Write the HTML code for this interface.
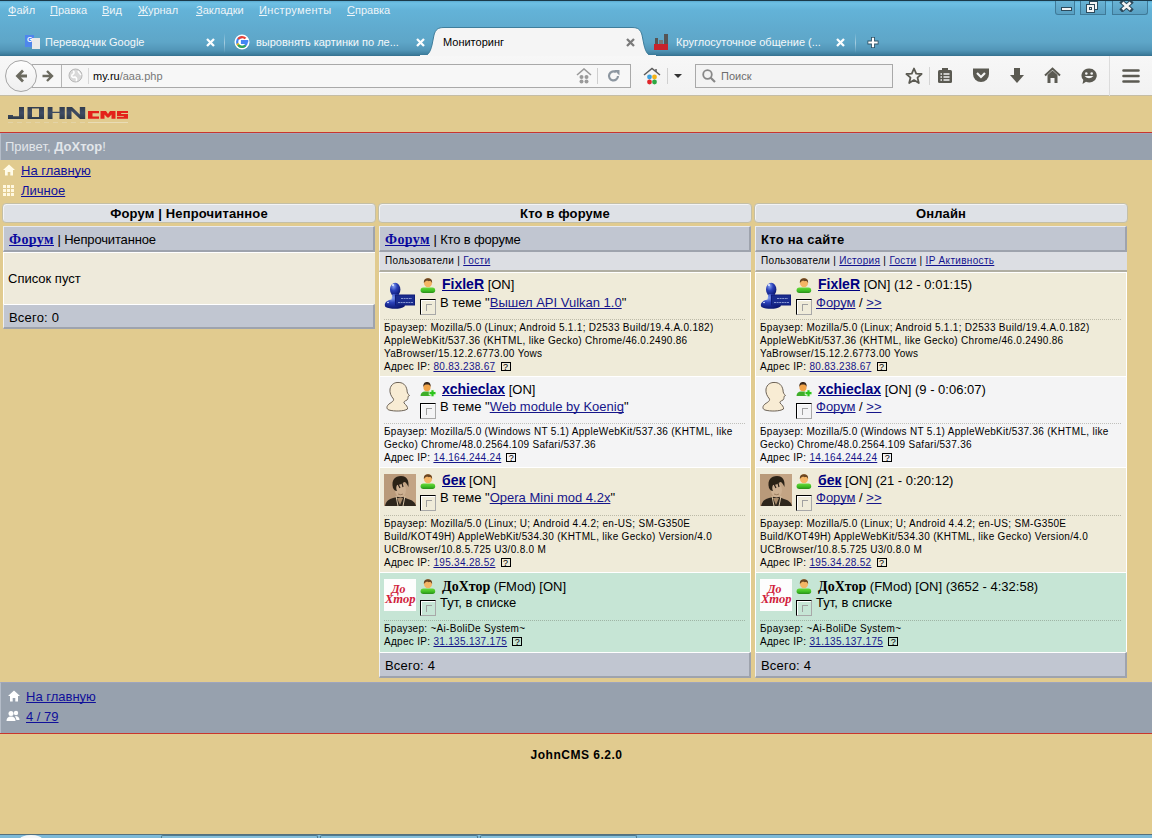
<!DOCTYPE html>
<html><head><meta charset="utf-8">
<style>
*{margin:0;padding:0;box-sizing:border-box}
html,body{width:1152px;height:838px;overflow:hidden;background:#e1cb8f;font-family:"Liberation Sans",sans-serif;position:relative}
.abs{position:absolute;white-space:nowrap}
a{color:#16168a;text-decoration:underline;text-decoration-skip-ink:none}
.menu{top:4px;font-size:11px;color:#eef5f9}
.menu u{text-decoration:underline;text-underline-offset:1px}
.tabt{top:36px;font-size:11px;color:#f4f8fa}
.tabx{top:35px;font-size:11px;color:#fff;font-weight:bold}
.logo{font-family:"Liberation Sans",sans-serif;font-weight:bold;font-size:17px;color:#3c4858;letter-spacing:1px;transform:scaleX(1.35);transform-origin:left top}
.logo2{font-family:"Liberation Sans",sans-serif;font-weight:bold;font-size:11px;color:#e0261e;letter-spacing:1px;transform:scaleX(1.3);transform-origin:left top}
.lnk{font-size:13px}
.lnk a{color:#10109a}
.hdr{top:203px;height:20px;background:#dee1e6;border:1px solid #c4bfa6;box-shadow:inset 1px 1px 0 #f3f3f5;border-radius:4px;text-align:center;font-weight:bold;font-size:13px;color:#000;padding-top:2px;letter-spacing:.15px}
.phdr{top:226px;height:26px;background:#c1c6d1;border-top:1px solid #e8eaf0;border-left:1px solid #eceef2;border-right:2px solid #9ea3ad;border-bottom:2px solid #9ea3ad;font-size:13px;padding:5px 0 0 5px;color:#000;letter-spacing:-.15px}
.sb{font-family:"Liberation Serif",serif;font-weight:bold;font-size:14px;color:#0a0a9e;letter-spacing:.4px}
.kb{font-weight:bold;letter-spacing:.25px}
.tabs{top:252px;height:20px;background:#dcdee3;border-left:1px solid #eceef2;border-bottom:2px solid #b0aea2;font-size:10px;letter-spacing:.32px;padding:3px 0 0 5px;color:#000}
.tabs a{color:#12128e}
.t13{font-size:13px;color:#000}
.nm{font-weight:bold;font-size:14px;color:#000080}
.nmb{font-weight:bold;font-size:14px;font-family:"Liberation Serif",serif}
.dots{height:1px;background-image:linear-gradient(90deg,rgba(60,60,40,.28) 50%,transparent 50%);background-size:2px 1px}
.sm{font-size:10px;color:#000;letter-spacing:.3px;line-height:13px}
.sm a{color:#16168a}
.q{display:inline-block;vertical-align:top;margin-top:2px;margin-left:2px;width:10px;height:9px;border:1px solid #000;font-size:9px;line-height:8px;text-align:center;letter-spacing:0}
.foot{background:#c1c6d1;border-top:1px solid #fff;border-left:1px solid #eceef2;border-right:2px solid #9ea3ad;border-bottom:2px solid #9ea3ad;font-size:13px;padding:5px 0 0 5px;color:#000;letter-spacing:.2px}

</style></head><body>
<!-- title bar + tabs -->
<div class="abs" style="left:0;top:0;width:1152px;height:56px;background:linear-gradient(#1e3e50 0,#1e3e50 1px,#5aaad0 1px,#6ec0e4 3px,#63b3d8 10px,#60abcf 28px,#5ea6c8 42px,#5296b8 50px,#3f80a0 54px,#34708e 56px)"></div>
<!-- window buttons -->
<div class="abs" style="left:1055px;top:0;width:20px;height:15px;border:1px solid #3f7a98;border-top:0;border-radius:0 0 0 3px;background:linear-gradient(#6ab4d6,#589fc2)"></div>
<div class="abs" style="left:1061px;top:7px;width:11px;height:4px;background:#f4f4f4;border:1px solid #2c4a5c"></div>
<div class="abs" style="left:1080px;top:0;width:26px;height:15px;border:1px solid #3f7a98;border-top:0;background:linear-gradient(#6ab4d6,#589fc2)"></div>
<div class="abs" style="left:1089px;top:1px;width:9px;height:9px;background:#f4f4f4;border:1px solid #2c4a5c"></div>
<div class="abs" style="left:1086px;top:4px;width:9px;height:9px;background:#f4f4f4;border:1px solid #2c4a5c"></div>
<div class="abs" style="left:1089px;top:7px;width:3px;height:3px;border:1px solid #2c4a5c"></div>
<div class="abs" style="left:1112px;top:0;width:36px;height:15px;border:1px solid #3f7a98;border-top:0;border-radius:0 0 3px 0;background:linear-gradient(#6ab4d6,#589fc2)"></div>
<svg class="abs" style="left:1119px;top:0px" width="15" height="12"><path d="M3.5 2.5 L11.5 9.5 M11.5 2.5 L3.5 9.5" stroke="#2c4a5c" stroke-width="4.6" stroke-linecap="square"/><path d="M3.5 2.5 L11.5 9.5 M11.5 2.5 L3.5 9.5" stroke="#f4f4f4" stroke-width="2.6"/></svg>
<div class="abs" style="left:0;top:0;width:1152px;height:1px;background:#1b3a4a"></div>

<div class="abs menu" style="left:8px"><u>Ф</u>айл</div>
<div class="abs menu" style="left:50px"><u>П</u>равка</div>
<div class="abs menu" style="left:102px"><u>В</u>ид</div>
<div class="abs menu" style="left:138px"><u>Ж</u>урнал</div>
<div class="abs menu" style="left:196px"><u>З</u>акладки</div>
<div class="abs menu" style="left:259px;letter-spacing:.35px"><u>И</u>нструменты</div>
<div class="abs menu" style="left:347px"><u>С</u>правка</div>

<!-- tab 1 -->
<div class="abs" style="left:25px;top:35px;width:9px;height:12px;background:#4f86ec"></div>
<div class="abs" style="left:32px;top:38px;width:8px;height:11px;background:#e9e9e9"></div>
<div class="abs" style="left:27px;top:36px;font-size:7px;color:#fff;font-weight:bold">G</div>
<div class="abs tabt" style="left:45px">Переводчик Google</div>
<svg class="abs" style="left:206px;top:38px" width="9" height="9" viewBox="0 0 9 9"><path d="M1 1 L8 8 M8 1 L1 8" stroke="#fbfdfe" stroke-width="2.3"/></svg>
<div class="abs" style="left:224px;top:33px;width:1px;height:20px;background:linear-gradient(rgba(255,255,255,0),rgba(255,255,255,.45),rgba(255,255,255,0))"></div>
<!-- tab 2 -->
<svg class="abs" style="left:234px;top:34px" width="16" height="16" viewBox="0 0 16 16"><circle cx="8" cy="8" r="7.5" fill="#fff"/><path d="M8 3.2A4.8 4.8 0 1 0 12.7 8.8H8V7.2h6.3" fill="none" stroke="#4285f4" stroke-width="2.2"/><path d="M4.2 5A4.8 4.8 0 0 1 11.5 4.6" fill="none" stroke="#ea4335" stroke-width="2.2"/><path d="M3.4 9.5A4.8 4.8 0 0 0 4.3 11" fill="none" stroke="#fbbc05" stroke-width="2.2"/><path d="M4.3 11A4.8 4.8 0 0 0 11.5 11.5" fill="none" stroke="#34a853" stroke-width="2.2"/></svg>
<div class="abs tabt" style="left:256px">выровнять картинки по ле...</div>
<svg class="abs" style="left:416px;top:38px" width="9" height="9" viewBox="0 0 9 9"><path d="M1 1 L8 8 M8 1 L1 8" stroke="#fbfdfe" stroke-width="2.3"/></svg>
<!-- active tab -->
<svg class="abs" style="left:420px;top:27px" width="236" height="30" viewBox="0 0 236 30"><path d="M0 29.5 C8 29.5 10 26 12 18 L14 8 C15.5 2.5 18 0.5 24 0.5 L212 0.5 C218 0.5 220.5 2.5 222 8 L224 18 C226 26 228 29.5 236 29.5 Z" fill="#f5f5f5" stroke="#3f7e9c" stroke-width="1"/></svg>
<div class="abs" style="left:420px;top:55px;width:236px;height:2px;background:#f5f5f5"></div>
<div class="abs tabt" style="left:443px;color:#000">Мониторинг</div>
<svg class="abs" style="left:626px;top:38px" width="9" height="9" viewBox="0 0 9 9"><path d="M1 1 L8 8 M8 1 L1 8" stroke="#7a7a7a" stroke-width="2.3"/></svg>
<!-- tab 4 -->
<div class="abs" style="left:654px;top:44px;width:14px;height:6px;background:#c8222b"></div>
<div class="abs" style="left:655px;top:38px;width:3px;height:6px;background:#555"></div>
<div class="abs" style="left:664px;top:34px;width:4px;height:10px;background:#555"></div>
<div class="abs" style="left:659px;top:40px;width:4px;height:4px;background:#777"></div>
<div class="abs tabt" style="left:676px">Круглосуточное общение (...</div>
<svg class="abs" style="left:836px;top:38px" width="9" height="9" viewBox="0 0 9 9"><path d="M1 1 L8 8 M8 1 L1 8" stroke="#fbfdfe" stroke-width="2.3"/></svg>
<div class="abs" style="left:855px;top:33px;width:1px;height:20px;background:linear-gradient(rgba(255,255,255,0),rgba(255,255,255,.45),rgba(255,255,255,0))"></div>
<svg class="abs" style="left:866px;top:36px" width="14" height="13" viewBox="0 0 14 13"><path d="M7 1V12M1.5 6.5H12.5" stroke="#2d5266" stroke-width="4"/><path d="M7 1.8V11.2M2.3 6.5H11.7" stroke="#fff" stroke-width="2.2"/></svg>

<!-- nav bar -->
<div class="abs" style="left:0;top:56px;width:1152px;height:40px;background:linear-gradient(#f7f7f7,#f2f2f2)"></div>
<div class="abs" style="left:0;top:95px;width:1152px;height:1px;background:#c5bda5"></div>
<!-- url bar -->
<div class="abs" style="left:32px;top:64px;width:599px;height:24px;border:1px solid #a9a9a9;background:#f7f7f7"></div>
<div class="abs" style="left:61px;top:65px;width:1px;height:22px;background:#b5b5b5"></div>
<div class="abs" style="left:88px;top:68px;width:1px;height:16px;background:#d8d8d8"></div>
<!-- back circle -->
<div class="abs" style="left:5px;top:60px;width:32px;height:32px;border-radius:50%;border:1px solid #a5a5a5;background:linear-gradient(#fdfdfd,#efefef)"></div>
<svg class="abs" style="left:14px;top:68px" width="16" height="16" viewBox="0 0 16 16"><path d="M9 2.5 L3.5 8 L9 13.5 M4 8 H13" fill="none" stroke="#6b6a5f" stroke-width="2.8" stroke-linejoin="miter"/></svg>
<svg class="abs" style="left:41px;top:69px" width="14" height="14" viewBox="0 0 14 14"><path d="M6 2 L11 7 L6 12 M10.5 7 H1.5" fill="none" stroke="#6b6a5f" stroke-width="2.4"/></svg>
<!-- globe -->
<svg class="abs" style="left:68px;top:68px" width="15" height="15" viewBox="0 0 15 15"><circle cx="7.5" cy="7.5" r="6.5" fill="#d9d9d9" stroke="#b9b9b9"/><path d="M5 3 C7 4 6 6 4 7 C3 9 5 10 7 9 C9 10 9 12 8 13 M10 3 C11 5 12 6 13 7" stroke="#fff" stroke-width="1.6" fill="none"/></svg>
<div class="abs" style="left:93px;top:70px;font-size:11px;color:#000;white-space:nowrap">my.ru<span style="color:#777">/aaa.php</span></div>
<!-- gray home -->
<svg class="abs" style="left:576px;top:68px" width="16" height="16" viewBox="0 0 16 16"><path d="M1 7 L8 1 L15 7" fill="none" stroke="#9a9a9a" stroke-width="1.6"/><circle cx="5.5" cy="9" r="2" fill="#9a9a9a"/><circle cx="10.5" cy="9" r="2" fill="#9a9a9a"/><circle cx="5.5" cy="13.5" r="2" fill="#9a9a9a"/><circle cx="10.5" cy="13.5" r="2" fill="#9a9a9a"/></svg>
<div class="abs" style="left:597px;top:68px;width:1px;height:16px;background:#cfcfcf"></div>
<svg class="abs" style="left:607px;top:69px" width="14" height="14" viewBox="0 0 14 14"><path d="M11 7 A4.5 4.5 0 1 1 9 3.2" fill="none" stroke="#8c96a0" stroke-width="2.2"/><path d="M7 1 L12.5 1 L12.5 6.5 Z" fill="#8c96a0"/></svg>
<!-- color home -->
<svg class="abs" style="left:643px;top:67px" width="18" height="18" viewBox="0 0 18 18"><path d="M1 8 L9 1.5 L17 8" fill="none" stroke="#5c5c5c" stroke-width="1.5"/><path d="M13 2 V5" stroke="#5c5c5c" stroke-width="1.5"/><circle cx="6.5" cy="10" r="2.4" fill="#3aa1e0"/><circle cx="11.5" cy="10" r="2.4" fill="#f4b318"/><circle cx="6.5" cy="15" r="2.4" fill="#e0262b"/><circle cx="11.5" cy="15" r="2.4" fill="#2da842"/></svg>
<div class="abs" style="left:667px;top:68px;width:1px;height:16px;background:#d0d0d0"></div>
<svg class="abs" style="left:674px;top:74px" width="9" height="5"><path d="M0 0 H8 L4 4 Z" fill="#333"/></svg>
<!-- search -->
<div class="abs" style="left:695px;top:64px;width:198px;height:24px;border:1px solid #a9a9a9;background:#f3f3f3"></div>
<svg class="abs" style="left:701px;top:68px" width="16" height="16" viewBox="0 0 16 16"><circle cx="6.5" cy="6.5" r="4.3" fill="none" stroke="#888" stroke-width="1.8"/><path d="M9.5 9.5 L14 14" stroke="#888" stroke-width="2.2"/></svg>
<div class="abs" style="left:721px;top:70px;font-size:11px;color:#6d6d6d">Поиск</div>
<!-- toolbar icons -->
<svg class="abs" style="left:905px;top:67px" width="18" height="18" viewBox="0 0 18 18"><path d="M9 1.5 L11.2 6.6 L16.6 7 L12.5 10.6 L13.8 16 L9 13.1 L4.2 16 L5.5 10.6 L1.4 7 L6.8 6.6 Z" fill="none" stroke="#5b5a52" stroke-width="1.8" stroke-linejoin="round"/></svg>
<div class="abs" style="left:929px;top:67px;width:1px;height:18px;background:#d4d4d4"></div>
<svg class="abs" style="left:937px;top:67px" width="16" height="17" viewBox="0 0 16 17"><rect x="1" y="3" width="14" height="13" rx="1.5" fill="#5b5a52"/><rect x="5" y="1" width="6" height="3" fill="#5b5a52"/><path d="M3.5 7H5M3.5 10H5M3.5 13H5M6.5 7H12.5M6.5 10H12.5M6.5 13H12.5" stroke="#f4f4f4" stroke-width="1.3"/></svg>
<svg class="abs" style="left:972px;top:67px" width="18" height="16" viewBox="0 0 18 16"><path d="M1 1.5 H17 V7 A8 8 0 0 1 1 7 Z" fill="#5b5a52"/><path d="M5 6 L9 10 L13 6" fill="none" stroke="#f4f4f4" stroke-width="2.2"/></svg>
<svg class="abs" style="left:1009px;top:67px" width="16" height="18" viewBox="0 0 16 18"><path d="M5 1 H11 V8 H15 L8 16 L1 8 H5 Z" fill="#5b5a52"/></svg>
<svg class="abs" style="left:1044px;top:67px" width="17" height="17" viewBox="0 0 17 17"><path d="M1 8.5 L8.5 1.5 L16 8.5" fill="none" stroke="#5b5a52" stroke-width="2"/><path d="M3.5 8 L8.5 3.5 L13.5 8 V16 H10.5 V11 H6.5 V16 H3.5 Z" fill="#5b5a52"/></svg>
<svg class="abs" style="left:1080px;top:67px" width="18" height="18" viewBox="0 0 18 18"><path d="M9 1.5 A7.5 7 0 1 1 6 14.8 L2.5 17 L3.3 13 A7.5 7 0 0 1 9 1.5Z" fill="#5b5a52"/><circle cx="6.3" cy="6.5" r="1.3" fill="#f4f4f4"/><circle cx="11.7" cy="6.5" r="1.3" fill="#f4f4f4"/><path d="M4.5 9 Q9 13.5 13.5 9 Z" fill="#f4f4f4"/></svg>
<div class="abs" style="left:1109px;top:56px;width:1px;height:40px;background:#dcdcdc"></div>
<svg class="abs" style="left:1122px;top:68px" width="18" height="16" viewBox="0 0 18 16"><path d="M1.5 2.5H16.5M1.5 8H16.5M1.5 13.5H16.5" stroke="#5b5a52" stroke-width="2.6" stroke-linecap="round"/></svg>

<!-- page -->
<div class="abs" style="left:0;top:96px;width:1152px;height:738px;background:#e1cb8f"></div>
<!-- logo -->
<svg class="abs" style="left:0;top:100px" width="140" height="30" viewBox="0 100 140 30">
<defs><linearGradient id="jg" x1="0" y1="0" x2="0" y2="1"><stop offset="0" stop-color="#323d4e"/><stop offset=".5" stop-color="#3f4c64"/><stop offset="1" stop-color="#2e3a48"/></linearGradient></defs>
<g fill="url(#jg)">
<path d="M19 107 H24 V119 H8 V115 H13 V116.3 H19 Z"/>
<path d="M27.5 107 H44 V119 H27.5 Z M32 108.6 V117 H39 V108.6 Z" fill-rule="evenodd"/>
<path d="M47.7 107 H52.5 V111.8 H59.5 V107 H64.8 V119 H59.5 V113 H52.5 V119 H47.7 Z"/>
<path d="M66.6 107 H72 L79.8 114.5 V107 H85.2 V119 H80 L71.5 111 V119 H66.6 Z"/>
</g>
<g fill="#e3221b">
<path d="M88 111 H99 V113.2 H92.5 V116.6 H99 V118.8 H88 Z"/>
<path d="M100.5 111 H106 L108 114 L110 111 H115.5 V118.8 H111.5 V114.5 L108.8 117.5 H107.2 L104.5 114.5 V118.8 H100.5 Z"/>
<path d="M117 111 H128 V113 H121.2 V113.9 H128 V118.8 H117 V116.8 H123.8 V115.9 H117 Z"/>
</g>
<path d="M8 122.5 H86" stroke="#e6dab8" stroke-width="1" stroke-dasharray="5 4" opacity=".6"/>
<path d="M88 122.5 H128" stroke="#ece2c0" stroke-width="1" opacity=".8"/>
</svg>
<!-- red line + greeting bar -->
<div class="abs" style="left:0;top:132px;width:1152px;height:1px;background:#c8362e"></div>
<div class="abs" style="left:0;top:133px;width:1152px;height:27px;background:#97a1ae;border-top:1px solid #9ea5bd;border-left:1px solid #b4bcc8"></div>
<div class="abs" style="left:5px;top:139px;font-size:13px;color:#e2e6ea">Привет, <b>ДоXтор</b>!</div>
<!-- links -->
<svg class="abs" style="left:2px;top:163px" width="14" height="14" viewBox="0 0 14 14"><path d="M7 1.5 L13 7 H11 V12.5 H8.3 V9 H5.7 V12.5 H3 V7 H1 Z" fill="#fffbe8"/></svg>
<div class="abs lnk" style="left:21px;top:163px"><a>На главную</a></div>
<svg class="abs" style="left:2px;top:184px" width="12" height="12" viewBox="0 0 12 12"><path d="M1 1h3v3h-3zM5 1h3v3h-3zM9 1h3v3h-3zM1 5h3v3h-3zM5 5h3v3h-3zM9 5h3v3h-3zM1 9h3v3h-3zM5 9h3v3h-3zM9 9h3v3h-3z" fill="#fff8e0"/></svg>
<div class="abs lnk" style="left:21px;top:183px"><a>Личное</a></div>

<!-- column headers -->
<div class="abs hdr" style="left:2px;width:374px">Форум | Непрочитанное</div>
<div class="abs hdr" style="left:378px;width:374px">Кто в форуме</div>
<div class="abs hdr" style="left:754px;width:374px">Онлайн</div>

<!-- col 1 -->
<div class="abs phdr" style="left:3px;width:372px"><a class="sb">Форум</a> | Непрочитанное</div>
<div class="abs" style="left:3px;top:252px;width:372px;height:52px;background:#eeeadb;border-top:1px solid #fff;border-left:1px solid #fff"></div>
<div class="abs t13" style="left:8px;top:271px">Список пуст</div>
<div class="abs foot" style="left:3px;top:304px;width:372px;height:25px">Всего: 0</div>

<!-- col 2 -->
<div class="abs phdr" style="left:379px;width:372px"><a class="sb">Форум</a> | Кто в форуме</div>
<div class="abs tabs" style="left:379px;width:372px">Пользователи | <a>Гости</a></div>

<div class="abs" style="left:379px;top:272px;width:372px;height:104px;background:#efebd9;border-top:1px solid #fff;border-left:1px solid #fff;border-right:1px solid #fff"></div>
<div class="abs" style="left:384px;top:279px;width:32px;height:32px"><svg width="32" height="32" viewBox="0 0 32 32"><defs><radialGradient id="bg1379" cx="35%" cy="25%" r="75%"><stop offset="0" stop-color="#8aa6f4"/><stop offset=".45" stop-color="#2a40b8"/><stop offset="1" stop-color="#0c1872"/></radialGradient></defs><ellipse cx="11.2" cy="10.5" rx="5.2" ry="6.8" fill="url(#bg1379)"/><path d="M8.5 15 H14 L14.5 20.5 C20 21.5 22 24 20.5 27.5 C17 30.5 6 30.5 1.5 28 C-0.5 25 2 21.5 7.5 20.5 Z" fill="url(#bg1379)"/><ellipse cx="9" cy="6" rx="1.2" ry="1" fill="#dfe8ff"/><ellipse cx="4" cy="23.5" rx="1" ry=".8" fill="#cfdcff"/><rect x="11" y="15.5" width="20" height="11" fill="#101c78"/><rect x="12" y="16.5" width="18" height="9" fill="#1a2c8e"/><path d="M17 19.5H28M14 23.5H29" stroke="#b8c4ee" stroke-width=".7" stroke-dasharray="2 .6"/></svg></div>
<div class="abs" style="left:420px;top:277px;width:16px;height:16px"><svg width="16" height="16" viewBox="0 0 16 16"><defs><linearGradient id="ug" x1="0" y1="0" x2="0" y2="1"><stop offset="0" stop-color="#6ad83a"/><stop offset=".6" stop-color="#3cbc22"/><stop offset="1" stop-color="#2a8c1a"/></linearGradient></defs><rect x="0.6" y="10.6" width="14.6" height="5.4" rx="2.7" fill="url(#ug)"/><ellipse cx="8" cy="5.8" rx="4.1" ry="4.5" fill="#f4b565"/><path d="M3.9 6 C3.6 2 5.8 1.2 8 1.2 C10.2 1.2 12.4 2 12.1 6 C11.3 4 10 3.6 8.6 4.2 C7.4 3.4 5.6 3.6 3.9 6 Z" fill="#6a4622"/></svg></div>
<div class="abs" style="left:420px;top:299px;width:16px;height:16px"><div style="position:absolute;left:0;top:0;width:16px;height:16px;border-left:1px solid #000;border-top:1px solid #000;border-right:1px solid #a8a8a8;border-bottom:1px solid #a8a8a8;box-shadow:inset 1px 1px 0 #fff"></div><div style="position:absolute;left:6px;top:5px;width:6px;height:7px;border-left:1px solid #a0a0a0;border-top:1px solid #a0a0a0"></div></div>
<div class="abs t13 nl" style="left:442px;top:276px"><a class="nm">FixleR</a> [ON]</div>
<div class="abs t13" style="left:440px;top:295px">В теме "<a>Вышел API Vulkan 1.0</a>"</div>
<div class="abs dots" style="left:384px;top:319px;width:362px"></div>
<div class="abs sm" style="left:384px;top:321px">Браузер: Mozilla/5.0 (Linux; Android 5.1.1; D2533 Build/19.4.A.0.182)</div>
<div class="abs sm" style="left:384px;top:334px">AppleWebKit/537.36 (KHTML, like Gecko) Chrome/46.0.2490.86</div>
<div class="abs sm" style="left:384px;top:347px">YaBrowser/15.12.2.6773.00 Yows</div>
<div class="abs sm" style="left:384px;top:360px">Адрес IP: <a>80.83.238.67</a> <span class="q">?</span></div>
<div class="abs" style="left:379px;top:376px;width:372px;height:91px;background:#f4f4f5;border-top:1px solid #fff;border-left:1px solid #fff;border-right:1px solid #fff"></div>
<div class="abs" style="left:384px;top:381px;width:32px;height:32px"><svg width="32" height="32" viewBox="0 0 32 32"><path d="M13 1.5 C19 1 22 4 23 9 C23 12 24 13 25.5 14.5 L24 15.5 C24 17 24 18 23 19 C21 20 19.5 20.5 20 22 C22 24 24 26 23.5 28 C20 30.5 10 30.5 5 29 C2 28 2.5 25 5 23 C8 21 10 20 9.5 18 C7 15 5.5 12 6 8 C7 3.5 10 1.8 13 1.5 Z" fill="#f8ecd4" stroke="#6c6256" stroke-width="1"/></svg></div>
<div class="abs" style="left:420px;top:381px;width:16px;height:16px"><svg width="16" height="16" viewBox="0 0 16 16"><path d="M0.5 15 C0.5 12 2.5 10.5 5 10.5 H9 C11 10.5 12 11 12.5 12 V15 Z" fill="#3fae2a"/><ellipse cx="7" cy="6" rx="3.6" ry="4.3" fill="#f1a44a"/><path d="M3.4 6 C3 2 5 1 7 1 C9 1 11 2 10.6 6 C10 4 9 3.5 7 3.5 C5 3.5 4 4 3.4 6 Z" fill="#3a2a1e"/><path d="M12.5 8.5 V15.8 M8.8 12.2 H16" stroke="#e8f8e0" stroke-width="4"/><path d="M12.5 9.2 V15.2 M9.5 12.2 H15.5" stroke="#2cc41c" stroke-width="2.2"/></svg></div>
<div class="abs" style="left:420px;top:403px;width:16px;height:16px"><div style="position:absolute;left:0;top:0;width:16px;height:16px;border-left:1px solid #000;border-top:1px solid #000;border-right:1px solid #a8a8a8;border-bottom:1px solid #a8a8a8;box-shadow:inset 1px 1px 0 #fff"></div><div style="position:absolute;left:6px;top:5px;width:6px;height:7px;border-left:1px solid #a0a0a0;border-top:1px solid #a0a0a0"></div></div>
<div class="abs t13 nl" style="left:442px;top:381px"><a class="nm">xchieclax</a> [ON]</div>
<div class="abs t13" style="left:440px;top:399px">В теме "<a>Web module by Koenig</a>"</div>
<div class="abs dots" style="left:384px;top:423px;width:362px"></div>
<div class="abs sm" style="left:384px;top:425px">Браузер: Mozilla/5.0 (Windows NT 5.1) AppleWebKit/537.36 (KHTML, like</div>
<div class="abs sm" style="left:384px;top:438px">Gecko) Chrome/48.0.2564.109 Safari/537.36</div>
<div class="abs sm" style="left:384px;top:451px">Адрес IP: <a>14.164.244.24</a> <span class="q">?</span></div>
<div class="abs" style="left:379px;top:467px;width:372px;height:105px;background:#efebd9;border-top:1px solid #fff;border-left:1px solid #fff;border-right:1px solid #fff"></div>
<div class="abs" style="left:384px;top:474px;width:32px;height:32px"><svg width="32" height="32" viewBox="0 0 32 32"><defs><filter id="pb379" x="-10%" y="-10%" width="120%" height="120%"><feGaussianBlur stdDeviation="0.7"/></filter></defs><rect width="32" height="32" fill="#b99a7a"/><g filter="url(#pb379)"><rect x="20" y="0" width="12" height="28" fill="#c3a484"/><path d="M1 32 C2 27 5 25 9 24 L13 23 L19 23 L24 25 C28 26 31 28 32 32 Z" fill="#2f271e"/><path d="M13 24 L16 31 L19 24 Z" fill="#a88a6a"/><path d="M12 22 L14 32 M21 22 L19 32" stroke="#d6c2a4" stroke-width="1"/><ellipse cx="16.5" cy="16" rx="5.5" ry="7.5" fill="#cdb091"/><path d="M14 20 Q17 21.5 19 20" stroke="#8c6e52" stroke-width="0.8" fill="none"/><path d="M9 14 C7 6 11 2 17 2 C23 2 25 6 24.5 13 C23 10 22 8 20 8 C18 10 16 11 13 11 C12 13 12 15 13 17 C11 17 10 16 9 14 Z" fill="#2b2219"/><path d="M14 10 L16 14 M18 9 L19 13" stroke="#2b2219" stroke-width="1.2"/></g></svg></div>
<div class="abs" style="left:420px;top:473px;width:16px;height:16px"><svg width="16" height="16" viewBox="0 0 16 16"><defs><linearGradient id="ug" x1="0" y1="0" x2="0" y2="1"><stop offset="0" stop-color="#6ad83a"/><stop offset=".6" stop-color="#3cbc22"/><stop offset="1" stop-color="#2a8c1a"/></linearGradient></defs><rect x="0.6" y="10.6" width="14.6" height="5.4" rx="2.7" fill="url(#ug)"/><ellipse cx="8" cy="5.8" rx="4.1" ry="4.5" fill="#f4b565"/><path d="M3.9 6 C3.6 2 5.8 1.2 8 1.2 C10.2 1.2 12.4 2 12.1 6 C11.3 4 10 3.6 8.6 4.2 C7.4 3.4 5.6 3.6 3.9 6 Z" fill="#6a4622"/></svg></div>
<div class="abs" style="left:420px;top:495px;width:16px;height:16px"><div style="position:absolute;left:0;top:0;width:16px;height:16px;border-left:1px solid #000;border-top:1px solid #000;border-right:1px solid #a8a8a8;border-bottom:1px solid #a8a8a8;box-shadow:inset 1px 1px 0 #fff"></div><div style="position:absolute;left:6px;top:5px;width:6px;height:7px;border-left:1px solid #a0a0a0;border-top:1px solid #a0a0a0"></div></div>
<div class="abs t13 nl" style="left:442px;top:472px"><a class="nm">бек</a> [ON]</div>
<div class="abs t13" style="left:440px;top:490px">В теме "<a>Opera Mini mod 4.2x</a>"</div>
<div class="abs dots" style="left:384px;top:515px;width:362px"></div>
<div class="abs sm" style="left:384px;top:517px">Браузер: Mozilla/5.0 (Linux; U; Android 4.4.2; en-US; SM-G350E</div>
<div class="abs sm" style="left:384px;top:530px">Build/KOT49H) AppleWebKit/534.30 (KHTML, like Gecko) Version/4.0</div>
<div class="abs sm" style="left:384px;top:543px">UCBrowser/10.8.5.725 U3/0.8.0 M</div>
<div class="abs sm" style="left:384px;top:556px">Адрес IP: <a>195.34.28.52</a> <span class="q">?</span></div>
<div class="abs" style="left:379px;top:572px;width:372px;height:80px;background:#c6e5d5;border-top:1px solid #fff;border-left:1px solid #fff;border-right:1px solid #fff"></div>
<div class="abs" style="left:384px;top:579px;width:32px;height:32px"><svg width="32" height="32" viewBox="0 0 32 32"><rect width="32" height="32" fill="#fdfdfd"/><text x="7.5" y="13.5" font-family="Liberation Serif" font-style="italic" font-weight="bold" font-size="12.5" fill="#d0203a" textLength="14" lengthAdjust="spacingAndGlyphs">До</text><text x="1" y="24" font-family="Liberation Serif" font-style="italic" font-weight="bold" font-size="12.5" fill="#d0203a" textLength="30.5" lengthAdjust="spacingAndGlyphs">Хтор</text></svg></div>
<div class="abs" style="left:420px;top:578px;width:16px;height:16px"><svg width="16" height="16" viewBox="0 0 16 16"><defs><linearGradient id="ug" x1="0" y1="0" x2="0" y2="1"><stop offset="0" stop-color="#6ad83a"/><stop offset=".6" stop-color="#3cbc22"/><stop offset="1" stop-color="#2a8c1a"/></linearGradient></defs><rect x="0.6" y="10.6" width="14.6" height="5.4" rx="2.7" fill="url(#ug)"/><ellipse cx="8" cy="5.8" rx="4.1" ry="4.5" fill="#f4b565"/><path d="M3.9 6 C3.6 2 5.8 1.2 8 1.2 C10.2 1.2 12.4 2 12.1 6 C11.3 4 10 3.6 8.6 4.2 C7.4 3.4 5.6 3.6 3.9 6 Z" fill="#6a4622"/></svg></div>
<div class="abs" style="left:420px;top:600px;width:16px;height:16px"><div style="position:absolute;left:0;top:0;width:16px;height:16px;border-left:1px solid #000;border-top:1px solid #000;border-right:1px solid #a8a8a8;border-bottom:1px solid #a8a8a8;box-shadow:inset 1px 1px 0 #fff"></div><div style="position:absolute;left:6px;top:5px;width:6px;height:7px;border-left:1px solid #a0a0a0;border-top:1px solid #a0a0a0"></div></div>
<div class="abs t13 nl" style="left:442px;top:579px"><b class="nmb">ДоXтор</b> (FMod) [ON]</div>
<div class="abs t13" style="left:440px;top:595px">Тут, в списке</div>
<div class="abs dots" style="left:384px;top:620px;width:362px"></div>
<div class="abs sm" style="left:384px;top:622px">Браузер: ~Ai-BoliDe System~</div>
<div class="abs sm" style="left:384px;top:635px">Адрес IP: <a>31.135.137.175</a> <span class="q">?</span></div>
<div class="abs foot" style="left:379px;top:652px;width:372px;height:26px">Всего: 4</div>

<!-- col 3 -->
<div class="abs phdr" style="left:755px;width:372px"><b class="kb">Кто на сайте</b></div>
<div class="abs tabs" style="left:755px;width:372px">Пользователи | <a>История</a> | <a>Гости</a> | <a>IP Активность</a></div>

<div class="abs" style="left:755px;top:272px;width:372px;height:104px;background:#efebd9;border-top:1px solid #fff;border-left:1px solid #fff;border-right:1px solid #fff"></div>
<div class="abs" style="left:760px;top:279px;width:32px;height:32px"><svg width="32" height="32" viewBox="0 0 32 32"><defs><radialGradient id="bg1755" cx="35%" cy="25%" r="75%"><stop offset="0" stop-color="#8aa6f4"/><stop offset=".45" stop-color="#2a40b8"/><stop offset="1" stop-color="#0c1872"/></radialGradient></defs><ellipse cx="11.2" cy="10.5" rx="5.2" ry="6.8" fill="url(#bg1755)"/><path d="M8.5 15 H14 L14.5 20.5 C20 21.5 22 24 20.5 27.5 C17 30.5 6 30.5 1.5 28 C-0.5 25 2 21.5 7.5 20.5 Z" fill="url(#bg1755)"/><ellipse cx="9" cy="6" rx="1.2" ry="1" fill="#dfe8ff"/><ellipse cx="4" cy="23.5" rx="1" ry=".8" fill="#cfdcff"/><rect x="11" y="15.5" width="20" height="11" fill="#101c78"/><rect x="12" y="16.5" width="18" height="9" fill="#1a2c8e"/><path d="M17 19.5H28M14 23.5H29" stroke="#b8c4ee" stroke-width=".7" stroke-dasharray="2 .6"/></svg></div>
<div class="abs" style="left:796px;top:277px;width:16px;height:16px"><svg width="16" height="16" viewBox="0 0 16 16"><defs><linearGradient id="ug" x1="0" y1="0" x2="0" y2="1"><stop offset="0" stop-color="#6ad83a"/><stop offset=".6" stop-color="#3cbc22"/><stop offset="1" stop-color="#2a8c1a"/></linearGradient></defs><rect x="0.6" y="10.6" width="14.6" height="5.4" rx="2.7" fill="url(#ug)"/><ellipse cx="8" cy="5.8" rx="4.1" ry="4.5" fill="#f4b565"/><path d="M3.9 6 C3.6 2 5.8 1.2 8 1.2 C10.2 1.2 12.4 2 12.1 6 C11.3 4 10 3.6 8.6 4.2 C7.4 3.4 5.6 3.6 3.9 6 Z" fill="#6a4622"/></svg></div>
<div class="abs" style="left:796px;top:299px;width:16px;height:16px"><div style="position:absolute;left:0;top:0;width:16px;height:16px;border-left:1px solid #000;border-top:1px solid #000;border-right:1px solid #a8a8a8;border-bottom:1px solid #a8a8a8;box-shadow:inset 1px 1px 0 #fff"></div><div style="position:absolute;left:6px;top:5px;width:6px;height:7px;border-left:1px solid #a0a0a0;border-top:1px solid #a0a0a0"></div></div>
<div class="abs t13 nl" style="left:818px;top:276px"><a class="nm">FixleR</a> [ON] (12 - 0:01:15)</div>
<div class="abs t13" style="left:816px;top:295px"><a>Форум</a> / <a>&gt;&gt;</a></div>
<div class="abs dots" style="left:760px;top:319px;width:362px"></div>
<div class="abs sm" style="left:760px;top:321px">Браузер: Mozilla/5.0 (Linux; Android 5.1.1; D2533 Build/19.4.A.0.182)</div>
<div class="abs sm" style="left:760px;top:334px">AppleWebKit/537.36 (KHTML, like Gecko) Chrome/46.0.2490.86</div>
<div class="abs sm" style="left:760px;top:347px">YaBrowser/15.12.2.6773.00 Yows</div>
<div class="abs sm" style="left:760px;top:360px">Адрес IP: <a>80.83.238.67</a> <span class="q">?</span></div>
<div class="abs" style="left:755px;top:376px;width:372px;height:91px;background:#f4f4f5;border-top:1px solid #fff;border-left:1px solid #fff;border-right:1px solid #fff"></div>
<div class="abs" style="left:760px;top:381px;width:32px;height:32px"><svg width="32" height="32" viewBox="0 0 32 32"><path d="M13 1.5 C19 1 22 4 23 9 C23 12 24 13 25.5 14.5 L24 15.5 C24 17 24 18 23 19 C21 20 19.5 20.5 20 22 C22 24 24 26 23.5 28 C20 30.5 10 30.5 5 29 C2 28 2.5 25 5 23 C8 21 10 20 9.5 18 C7 15 5.5 12 6 8 C7 3.5 10 1.8 13 1.5 Z" fill="#f8ecd4" stroke="#6c6256" stroke-width="1"/></svg></div>
<div class="abs" style="left:796px;top:381px;width:16px;height:16px"><svg width="16" height="16" viewBox="0 0 16 16"><path d="M0.5 15 C0.5 12 2.5 10.5 5 10.5 H9 C11 10.5 12 11 12.5 12 V15 Z" fill="#3fae2a"/><ellipse cx="7" cy="6" rx="3.6" ry="4.3" fill="#f1a44a"/><path d="M3.4 6 C3 2 5 1 7 1 C9 1 11 2 10.6 6 C10 4 9 3.5 7 3.5 C5 3.5 4 4 3.4 6 Z" fill="#3a2a1e"/><path d="M12.5 8.5 V15.8 M8.8 12.2 H16" stroke="#e8f8e0" stroke-width="4"/><path d="M12.5 9.2 V15.2 M9.5 12.2 H15.5" stroke="#2cc41c" stroke-width="2.2"/></svg></div>
<div class="abs" style="left:796px;top:403px;width:16px;height:16px"><div style="position:absolute;left:0;top:0;width:16px;height:16px;border-left:1px solid #000;border-top:1px solid #000;border-right:1px solid #a8a8a8;border-bottom:1px solid #a8a8a8;box-shadow:inset 1px 1px 0 #fff"></div><div style="position:absolute;left:6px;top:5px;width:6px;height:7px;border-left:1px solid #a0a0a0;border-top:1px solid #a0a0a0"></div></div>
<div class="abs t13 nl" style="left:818px;top:381px"><a class="nm">xchieclax</a> [ON] (9 - 0:06:07)</div>
<div class="abs t13" style="left:816px;top:399px"><a>Форум</a> / <a>&gt;&gt;</a></div>
<div class="abs dots" style="left:760px;top:423px;width:362px"></div>
<div class="abs sm" style="left:760px;top:425px">Браузер: Mozilla/5.0 (Windows NT 5.1) AppleWebKit/537.36 (KHTML, like</div>
<div class="abs sm" style="left:760px;top:438px">Gecko) Chrome/48.0.2564.109 Safari/537.36</div>
<div class="abs sm" style="left:760px;top:451px">Адрес IP: <a>14.164.244.24</a> <span class="q">?</span></div>
<div class="abs" style="left:755px;top:467px;width:372px;height:105px;background:#efebd9;border-top:1px solid #fff;border-left:1px solid #fff;border-right:1px solid #fff"></div>
<div class="abs" style="left:760px;top:474px;width:32px;height:32px"><svg width="32" height="32" viewBox="0 0 32 32"><defs><filter id="pb755" x="-10%" y="-10%" width="120%" height="120%"><feGaussianBlur stdDeviation="0.7"/></filter></defs><rect width="32" height="32" fill="#b99a7a"/><g filter="url(#pb755)"><rect x="20" y="0" width="12" height="28" fill="#c3a484"/><path d="M1 32 C2 27 5 25 9 24 L13 23 L19 23 L24 25 C28 26 31 28 32 32 Z" fill="#2f271e"/><path d="M13 24 L16 31 L19 24 Z" fill="#a88a6a"/><path d="M12 22 L14 32 M21 22 L19 32" stroke="#d6c2a4" stroke-width="1"/><ellipse cx="16.5" cy="16" rx="5.5" ry="7.5" fill="#cdb091"/><path d="M14 20 Q17 21.5 19 20" stroke="#8c6e52" stroke-width="0.8" fill="none"/><path d="M9 14 C7 6 11 2 17 2 C23 2 25 6 24.5 13 C23 10 22 8 20 8 C18 10 16 11 13 11 C12 13 12 15 13 17 C11 17 10 16 9 14 Z" fill="#2b2219"/><path d="M14 10 L16 14 M18 9 L19 13" stroke="#2b2219" stroke-width="1.2"/></g></svg></div>
<div class="abs" style="left:796px;top:473px;width:16px;height:16px"><svg width="16" height="16" viewBox="0 0 16 16"><defs><linearGradient id="ug" x1="0" y1="0" x2="0" y2="1"><stop offset="0" stop-color="#6ad83a"/><stop offset=".6" stop-color="#3cbc22"/><stop offset="1" stop-color="#2a8c1a"/></linearGradient></defs><rect x="0.6" y="10.6" width="14.6" height="5.4" rx="2.7" fill="url(#ug)"/><ellipse cx="8" cy="5.8" rx="4.1" ry="4.5" fill="#f4b565"/><path d="M3.9 6 C3.6 2 5.8 1.2 8 1.2 C10.2 1.2 12.4 2 12.1 6 C11.3 4 10 3.6 8.6 4.2 C7.4 3.4 5.6 3.6 3.9 6 Z" fill="#6a4622"/></svg></div>
<div class="abs" style="left:796px;top:495px;width:16px;height:16px"><div style="position:absolute;left:0;top:0;width:16px;height:16px;border-left:1px solid #000;border-top:1px solid #000;border-right:1px solid #a8a8a8;border-bottom:1px solid #a8a8a8;box-shadow:inset 1px 1px 0 #fff"></div><div style="position:absolute;left:6px;top:5px;width:6px;height:7px;border-left:1px solid #a0a0a0;border-top:1px solid #a0a0a0"></div></div>
<div class="abs t13 nl" style="left:818px;top:472px"><a class="nm">бек</a> [ON] (21 - 0:20:12)</div>
<div class="abs t13" style="left:816px;top:490px"><a>Форум</a> / <a>&gt;&gt;</a></div>
<div class="abs dots" style="left:760px;top:515px;width:362px"></div>
<div class="abs sm" style="left:760px;top:517px">Браузер: Mozilla/5.0 (Linux; U; Android 4.4.2; en-US; SM-G350E</div>
<div class="abs sm" style="left:760px;top:530px">Build/KOT49H) AppleWebKit/534.30 (KHTML, like Gecko) Version/4.0</div>
<div class="abs sm" style="left:760px;top:543px">UCBrowser/10.8.5.725 U3/0.8.0 M</div>
<div class="abs sm" style="left:760px;top:556px">Адрес IP: <a>195.34.28.52</a> <span class="q">?</span></div>
<div class="abs" style="left:755px;top:572px;width:372px;height:80px;background:#c6e5d5;border-top:1px solid #fff;border-left:1px solid #fff;border-right:1px solid #fff"></div>
<div class="abs" style="left:760px;top:579px;width:32px;height:32px"><svg width="32" height="32" viewBox="0 0 32 32"><rect width="32" height="32" fill="#fdfdfd"/><text x="7.5" y="13.5" font-family="Liberation Serif" font-style="italic" font-weight="bold" font-size="12.5" fill="#d0203a" textLength="14" lengthAdjust="spacingAndGlyphs">До</text><text x="1" y="24" font-family="Liberation Serif" font-style="italic" font-weight="bold" font-size="12.5" fill="#d0203a" textLength="30.5" lengthAdjust="spacingAndGlyphs">Хтор</text></svg></div>
<div class="abs" style="left:796px;top:578px;width:16px;height:16px"><svg width="16" height="16" viewBox="0 0 16 16"><defs><linearGradient id="ug" x1="0" y1="0" x2="0" y2="1"><stop offset="0" stop-color="#6ad83a"/><stop offset=".6" stop-color="#3cbc22"/><stop offset="1" stop-color="#2a8c1a"/></linearGradient></defs><rect x="0.6" y="10.6" width="14.6" height="5.4" rx="2.7" fill="url(#ug)"/><ellipse cx="8" cy="5.8" rx="4.1" ry="4.5" fill="#f4b565"/><path d="M3.9 6 C3.6 2 5.8 1.2 8 1.2 C10.2 1.2 12.4 2 12.1 6 C11.3 4 10 3.6 8.6 4.2 C7.4 3.4 5.6 3.6 3.9 6 Z" fill="#6a4622"/></svg></div>
<div class="abs" style="left:796px;top:600px;width:16px;height:16px"><div style="position:absolute;left:0;top:0;width:16px;height:16px;border-left:1px solid #000;border-top:1px solid #000;border-right:1px solid #a8a8a8;border-bottom:1px solid #a8a8a8;box-shadow:inset 1px 1px 0 #fff"></div><div style="position:absolute;left:6px;top:5px;width:6px;height:7px;border-left:1px solid #a0a0a0;border-top:1px solid #a0a0a0"></div></div>
<div class="abs t13 nl" style="left:818px;top:579px"><b class="nmb">ДоXтор</b> (FMod) [ON] (3652 - 4:32:58)</div>
<div class="abs t13" style="left:816px;top:595px">Тут, в списке</div>
<div class="abs dots" style="left:760px;top:620px;width:362px"></div>
<div class="abs sm" style="left:760px;top:622px">Браузер: ~Ai-BoliDe System~</div>
<div class="abs sm" style="left:760px;top:635px">Адрес IP: <a>31.135.137.175</a> <span class="q">?</span></div>
<div class="abs foot" style="left:755px;top:652px;width:372px;height:26px">Всего: 4</div>

<div class="abs" style="left:0;top:682px;width:1152px;height:51px;background:#97a1ae;border-top:1px solid #9ea5bd;border-left:1px solid #b4bcc8"></div>
<div class="abs" style="left:0;top:733px;width:1152px;height:1px;background:#c8362e"></div>
<svg class="abs" style="left:7px;top:689px" width="14" height="14" viewBox="0 0 14 14"><path d="M7 1.5 L13 7 H11 V12.5 H8.3 V9 H5.7 V12.5 H3 V7 H1 Z" fill="#fff"/></svg>
<div class="abs lnk" style="left:26px;top:689px"><a>На главную</a></div>
<svg class="abs" style="left:6px;top:710px" width="14" height="12" viewBox="0 0 14 12"><circle cx="5" cy="3.5" r="2.5" fill="#fff"/><path d="M0.5 11 C0.5 8 2 6.5 5 6.5 C8 6.5 9.5 8 9.5 11 Z" fill="#fff"/><circle cx="10" cy="3" r="2.2" fill="#fff"/><path d="M9 6 C12 6 13.5 7.5 13.5 10 H10.5" fill="#fff"/></svg>
<div class="abs lnk" style="left:26px;top:709px"><a>4 / 79</a></div>
<div class="abs" style="left:0;top:748px;width:1152px;text-align:center;font-size:12px;font-weight:bold;color:#000;letter-spacing:.5px;padding-left:1px">JohnCMS 6.2.0</div>
<div class="abs" style="left:0;top:834px;width:1152px;height:4px;background:#7cb9d8;border-top:1px solid #55707c"></div>
<div class="abs" style="left:20px;top:835px;width:22px;height:8px;border-radius:50%;background:#f4f8fa"></div>
<div class="abs" style="left:161px;top:835px;width:157px;height:4px;border:1px solid #4f7a90;border-bottom:0;border-radius:2px 2px 0 0;background:#86c0dc"></div>
<div class="abs" style="left:320px;top:835px;width:158px;height:4px;border:1px solid #4f7a90;border-bottom:0;border-radius:2px 2px 0 0;background:#86c0dc"></div>
<div class="abs" style="left:480px;top:835px;width:157px;height:4px;border:1px solid #4f7a90;border-bottom:0;border-radius:2px 2px 0 0;background:#86c0dc"></div>

</body></html>
